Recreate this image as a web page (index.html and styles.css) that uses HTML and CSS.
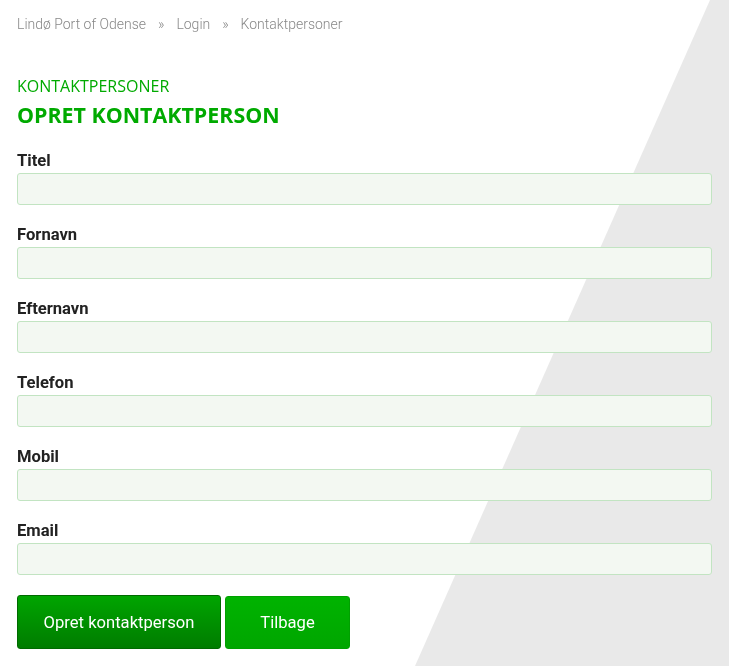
FILE: index.html
```html
<!DOCTYPE html>
<html lang="da">
<head>
<meta charset="utf-8">
<title>Opret kontaktperson</title>
<link rel="stylesheet" href="styles.css">
</head>
<body>
<div class="bg-shape"></div>
<main class="page">
  <nav class="breadcrumb">
    <a href="#">Lindø Port of Odense</a>
    <span class="sep">»</span>
    <a href="#">Login</a>
    <span class="sep">»</span>
    <span>Kontaktpersoner</span>
  </nav>
  <p class="kicker">KONTAKTPERSONER</p>
  <h1 class="title">OPRET KONTAKTPERSON</h1>
  <form class="form">
    <div class="field"><label>Titel</label><input type="text"></div>
    <div class="field"><label>Fornavn</label><input type="text"></div>
    <div class="field"><label>Efternavn</label><input type="text"></div>
    <div class="field"><label>Telefon</label><input type="text"></div>
    <div class="field"><label>Mobil</label><input type="text"></div>
    <div class="field"><label>Email</label><input type="text"></div>
    <div class="actions">
      <button type="button" class="btn btn-primary">Opret kontaktperson</button>
      <button type="button" class="btn btn-secondary">Tilbage</button>
    </div>
  </form>
</main>
</body>
</html>
```
FILE: styles.css
```css
html, body {
  margin: 0;
  padding: 0;
  background: #fff;
  height: 100%;
  overflow: hidden;
}
body {
  font-family: Roboto, "Liberation Sans", sans-serif;
  position: relative;
}
.bg-shape {
  position: fixed;
  inset: 0;
  background: #e9e9e9;
  clip-path: polygon(710px 0, 100% 0, 100% 666px, 415px 666px);
  z-index: 0;
}
.page {
  position: relative;
  z-index: 1;
  padding: 15px 17px 0 17px;
}
.breadcrumb {
  font-size: 14px;
  font-weight: 300;
  color: #888;
  display: flex;
  line-height: 18px;
}
.breadcrumb a, .breadcrumb span {
  color: #888;
  text-decoration: none;
}
.breadcrumb .sep {
  margin: 0 12px 0 12px;
}
.kicker {
  font-family: "Open Sans", sans-serif;
  font-size: 16px;
  color: #00aa00;
  margin: 42px 0 0 0;
  line-height: 22px;
}
.title {
  font-family: "Open Sans", sans-serif;
  font-size: 21.4px;
  font-weight: 700;
  color: #00aa00;
  margin: 3px 0 0 0;
  line-height: 30px;
}
.form {
  display: flex;
  flex-direction: column;
  margin-top: 20px;
}
.field {
  display: flex;
  flex-direction: column;
  margin-bottom: 19px;
}
.field label {
  font-size: 16.6px;
  font-weight: 700;
  color: #222;
  line-height: 22px;
  margin-bottom: 1px;
}
.field input {
  box-sizing: border-box;
  height: 32px;
  width: 100%;
  background: #f3f8f2;
  border: 1px solid #c2e4c2;
  border-radius: 3px;
  outline: none;
}
.actions {
  display: flex;
  gap: 4px;
  margin-top: 1px;
  align-items: flex-start;
}
.btn {
  font-family: Roboto, "Liberation Sans", sans-serif;
  font-size: 16.6px;
  color: #fff;
  height: 54px;
  border-radius: 3px;
  cursor: pointer;
}
.btn-primary {
  width: 204px;
  background: linear-gradient(#00a500, #007c00);
  border: 1px solid #006a00;
}
.btn-secondary {
  width: 125px;
  height: 53px;
  margin-top: 1px;
  background: linear-gradient(#00b300, #00a600);
  border: 1px solid #00a000;
}
```
